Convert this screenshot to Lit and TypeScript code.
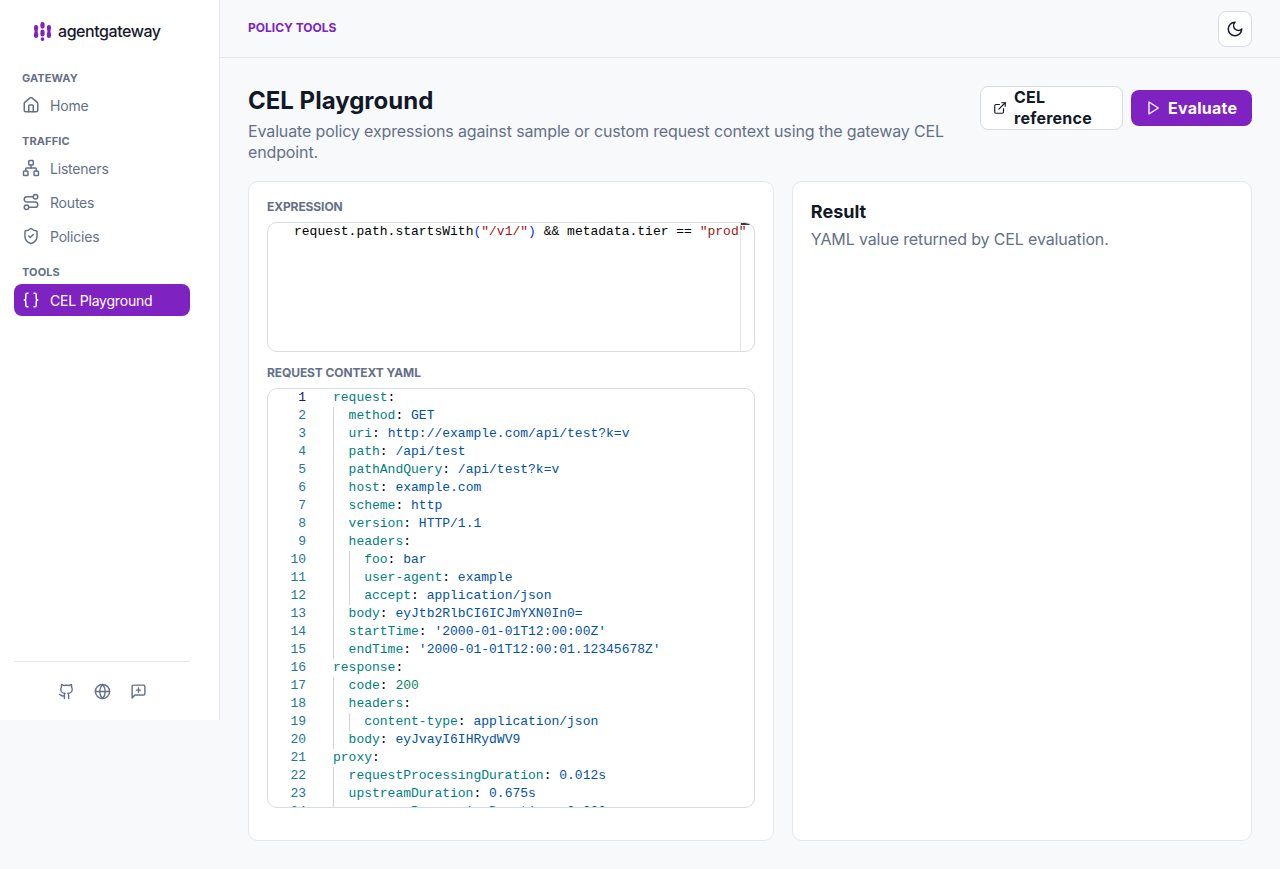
import { LitElement, html, css, svg } from "lit";
import { customElement } from "lit/decorators.js";

const icons = {
  home: svg`<path d="M15 21v-8a1 1 0 0 0-1-1h-4a1 1 0 0 0-1 1v8"/><path d="M3 10a2 2 0 0 1 .709-1.528l7-5.999a2 2 0 0 1 2.582 0l7 5.999A2 2 0 0 1 21 10v9a2 2 0 0 1-2 2H5a2 2 0 0 1-2-2z"/>`,
  network: svg`<rect x="16" y="16" width="6" height="6" rx="1"/><rect x="2" y="16" width="6" height="6" rx="1"/><rect x="9" y="2" width="6" height="6" rx="1"/><path d="M5 16v-3a1 1 0 0 1 1-1h12a1 1 0 0 1 1 1v3"/><path d="M12 12V8"/>`,
  route: svg`<circle cx="6" cy="19" r="3"/><path d="M9 19h8.5a3.5 3.5 0 0 0 0-7h-11a3.5 3.5 0 0 1 0-7H15"/><circle cx="18" cy="5" r="3"/>`,
  shield: svg`<path d="M20 13c0 5-3.5 7.5-7.66 8.95a1 1 0 0 1-.67-.01C7.5 20.5 4 18 4 13V6a1 1 0 0 1 1-1c2 0 4.5-1.2 6.24-2.72a1.17 1.17 0 0 1 1.52 0C14.51 3.81 17 5 19 5a1 1 0 0 1 1 1z"/><path d="m9 12 2 2 4-4"/>`,
  braces: svg`<path d="M8 3H7a2 2 0 0 0-2 2v5a2 2 0 0 1-2 2 2 2 0 0 1 2 2v5c0 1.1.9 2 2 2h1"/><path d="M16 21h1a2 2 0 0 0 2-2v-5c0-1.1.9-2 2-2a2 2 0 0 1-2-2V5a2 2 0 0 0-2-2h-1"/>`,
  github: svg`<path d="M15 22v-4a4.8 4.8 0 0 0-1-3.5c3 0 6-2 6-5.5.08-1.25-.27-2.48-1-3.5.28-1.15.28-2.35 0-3.5 0 0-1 0-3 1.5-2.64-.5-5.36-.5-8 0C6 2 5 2 5 2c-.3 1.15-.3 2.35 0 3.5A5.403 5.403 0 0 0 4 9c0 3.5 3 5.5 6 5.5-.39.49-.68 1.05-.85 1.65-.17.6-.22 1.23-.15 1.85v4"/><path d="M9 18c-4.51 2-5-2-7-2"/>`,
  globe: svg`<circle cx="12" cy="12" r="10"/><path d="M12 2a14.5 14.5 0 0 0 0 20 14.5 14.5 0 0 0 0-20"/><path d="M2 12h20"/>`,
  feedback: svg`<path d="M21 15a2 2 0 0 1-2 2H7l-4 4V5a2 2 0 0 1 2-2h14a2 2 0 0 1 2 2z"/><path d="M12 7v6"/><path d="M9 10h6"/>`,
  moon: svg`<path d="M12 3a6 6 0 0 0 9 9 9 9 0 1 1-9-9Z"/>`,
  external: svg`<path d="M15 3h6v6"/><path d="M10 14 21 3"/><path d="M18 13v6a2 2 0 0 1-2 2H5a2 2 0 0 1-2-2V8a2 2 0 0 1 2-2h6"/>`,
  play: svg`<polygon points="6 3 20 12 6 21 6 3"/>`,
};

const icon = (name: keyof typeof icons, size: number) => html`<svg
  class="icon"
  width=${size}
  height=${size}
  viewBox="0 0 24 24"
  fill="none"
  stroke="currentColor"
  stroke-width="2"
  stroke-linecap="round"
  stroke-linejoin="round"
>${icons[name]}</svg>`;

// indent, key, value, value kind
type YamlLine = [number, string, string?, string?];

const yaml: YamlLine[] = [
  [0, "request"],
  [1, "method", "GET"],
  [1, "uri", "http://example.com/api/test?k=v"],
  [1, "path", "/api/test"],
  [1, "pathAndQuery", "/api/test?k=v"],
  [1, "host", "example.com"],
  [1, "scheme", "http"],
  [1, "version", "HTTP/1.1"],
  [1, "headers"],
  [2, "foo", "bar"],
  [2, "user-agent", "example"],
  [2, "accept", "application/json"],
  [1, "body", "eyJtb2RlbCI6ICJmYXN0In0="],
  [1, "startTime", "'2000-01-01T12:00:00Z'"],
  [1, "endTime", "'2000-01-01T12:00:01.12345678Z'"],
  [0, "response"],
  [1, "code", "200", "num"],
  [1, "headers"],
  [2, "content-type", "application/json"],
  [1, "body", "eyJvayI6IHRydWV9"],
  [0, "proxy"],
  [1, "requestProcessingDuration", "0.012s"],
  [1, "upstreamDuration", "0.675s"],
  [1, "responseProcessingDuration", "0.000s"],
];

@customElement("app-root")
export class AppRoot extends LitElement {
  static styles = css`
    :host {
      display: flex;
      align-items: flex-start;
      min-height: 100vh;
      background: #f8f9fb;
      color: #111827;
      font-family: Inter, "Liberation Sans", sans-serif;
    }
    .icon {
      display: block;
      flex: none;
    }
    .sidebar {
      box-sizing: border-box;
      width: 220px;
      height: 720px;
      flex: none;
      display: flex;
      flex-direction: column;
      padding: 0 29px 0 14px;
      background: #fff;
      border-right: 1px solid #e5e7ec;
    }
    .logo {
      display: flex;
      align-items: center;
      gap: 7px;
      height: 62px;
      padding-left: 20px;
      font-size: 16px;
      font-weight: 500;
      letter-spacing: -0.45px;
      color: #171a2b;
    }
    .section {
      margin: 0;
      padding-left: 8px;
      font-size: 11px;
      line-height: 14px;
      font-weight: 700;
      letter-spacing: 0.1px;
      color: #64708a;
    }
    .section.first {
      margin-top: 9px;
    }
    .section.next {
      margin-top: 12px;
    }
    .nav {
      display: flex;
      flex-direction: column;
      margin-top: 3px;
    }
    .item {
      display: flex;
      align-items: center;
      gap: 10px;
      height: 34px;
      padding: 0 8px;
      border-radius: 8px;
      font-size: 14px;
      letter-spacing: -0.2px;
      color: #64708a;
    }
    .item.active {
      height: 32px;
      margin-top: 2px;
      background: #7e22c2;
      color: #fff;
    }
    .side-foot {
      margin-top: auto;
      height: 58px;
      border-top: 1px solid #e5e7ec;
      display: flex;
      justify-content: center;
      align-items: center;
      gap: 19px;
      color: #64708a;
    }
    .main {
      flex: 1;
      min-width: 0;
    }
    .topbar {
      box-sizing: border-box;
      height: 58px;
      display: flex;
      align-items: center;
      justify-content: space-between;
      padding: 0 28px;
      border-bottom: 1px solid #e5e7ec;
    }
    .crumb {
      margin-bottom: 2px;
      font-size: 12px;
      font-weight: 700;
      color: #7e22c2;
    }
    .theme {
      box-sizing: border-box;
      width: 34px;
      height: 36px;
      display: flex;
      align-items: center;
      justify-content: center;
      background: #fff;
      border: 1px solid #d7dbe4;
      border-radius: 8px;
      color: #171a2b;
    }
    .content {
      padding: 28px 28px 0;
    }
    .head {
      display: flex;
      justify-content: space-between;
      align-items: flex-start;
      height: 95px;
    }
    .titles {
      width: 704px;
    }
    h1 {
      margin: 0;
      font-size: 24px;
      line-height: 30px;
      font-weight: 700;
      color: #111827;
    }
    .sub {
      margin: 0;
      font-size: 16px;
      line-height: 21px;
      letter-spacing: -0.13px;
      color: #64708a;
    }
    .titles .sub {
      margin-top: 5px;
    }
    .actions {
      display: flex;
      align-items: center;
      gap: 8px;
    }
    .btn {
      box-sizing: border-box;
      display: flex;
      align-items: center;
      border-radius: 8px;
      font-size: 16px;
      line-height: 21px;
      font-weight: 700;
      letter-spacing: 0.25px;
    }
    .btn.ghost {
      width: 143px;
      height: 44px;
      gap: 7px;
      padding: 0 12px;
      background: #fff;
      border: 1px solid #d7dbe4;
      color: #111827;
    }
    .btn.primary {
      width: 121px;
      height: 36px;
      gap: 7px;
      padding: 0 14px;
      background: #7e22c2;
      color: #fff;
    }
    .grid {
      display: grid;
      grid-template-columns: 8fr 7fr;
      gap: 18px;
    }
    .card {
      background: #fff;
      border: 1px solid #e5e7ec;
      border-radius: 10px;
      padding: 18px;
      min-width: 0;
    }
    .card.form {
      padding-bottom: 32px;
    }
    .label {
      margin: 0 0 9px;
      font-size: 12px;
      line-height: 13px;
      font-weight: 700;
      letter-spacing: -0.1px;
      color: #64708a;
    }
    .label.second {
      margin-top: 14px;
    }
    .editor {
      box-sizing: border-box;
      position: relative;
      overflow: hidden;
      border: 1px solid #d7dbe4;
      border-radius: 10px;
      background: #fff;
      font-family: "Liberation Mono", monospace;
      font-size: 13px;
      line-height: 18px;
      color: #000;
      white-space: pre;
    }
    .editor.expr {
      height: 130px;
      padding-left: 26px;
    }
    .editor.yaml {
      height: 420px;
    }
    .expr-line {
      position: relative;
    }
    .ruler {
      position: absolute;
      top: 0;
      right: 0;
      bottom: 0;
      width: 13px;
      border-left: 1px solid #e6e6e6;
    }
    .ruler::before {
      content: "";
      position: absolute;
      top: 0;
      left: 0;
      width: 9px;
      height: 2px;
      background: #3a3a3a;
    }
    .bracket {
      color: #0431fa;
    }
    .str {
      color: #a31515;
    }
    .line {
      display: flex;
      height: 18px;
    }
    .ln {
      width: 38px;
      margin-right: 27px;
      flex: none;
      text-align: right;
      color: #237893;
    }
    .ln.current {
      color: #0b216f;
    }
    .guide {
      box-sizing: border-box;
      width: 15.6px;
      flex: none;
      border-left: 1px solid #d3d3d3;
    }
    .key {
      color: #008080;
    }
    .val {
      color: #0451a5;
    }
    .num {
      color: #098658;
    }
    .result-title {
      margin: 0 0 5px;
      font-size: 18px;
      line-height: 24px;
      font-weight: 700;
      color: #111827;
    }
  `;

  private renderYamlLine(l: YamlLine, i: number) {
    const [indent, key, value, kind] = l;
    return html`<div class="line">
      <span class="ln ${i === 0 ? "current" : ""}">${i + 1}</span>
      ${Array.from({ length: indent }, () => html`<span class="guide"></span>`)}
      <span><span class="key">${key}</span>:${value
        ? html` <span class=${kind === "num" ? "num" : "val"}>${value}</span>`
        : ""}</span>
    </div>`;
  }

  private renderLogo() {
    return html`<svg width="17" height="19" viewBox="0 0 18 20" fill="#7e22c2" class="icon">
      <rect x="0" y="3" width="4.4" height="6.4" rx="2.2" />
      <rect x="0.6" y="8" width="3.2" height="4" />
      <rect x="0" y="10.6" width="4.4" height="6.4" rx="2.2" />
      <rect x="6.8" y="0" width="4.4" height="7" rx="2.2" />
      <rect x="6.8" y="8" width="4.4" height="7.4" rx="2.2" />
      <circle cx="9" cy="18" r="2" />
      <rect x="13.6" y="3" width="4.4" height="6.4" rx="2.2" />
      <rect x="14.2" y="8" width="3.2" height="4" />
      <rect x="13.6" y="10.6" width="4.4" height="6.4" rx="2.2" />
    </svg>`;
  }

  render() {
    return html`
      <aside class="sidebar">
        <div class="logo">${this.renderLogo()}<span>agentgateway</span></div>
        <p class="section first">GATEWAY</p>
        <nav class="nav">
          <div class="item">${icon("home", 18)}Home</div>
        </nav>
        <p class="section next">TRAFFIC</p>
        <nav class="nav">
          <div class="item">${icon("network", 18)}Listeners</div>
          <div class="item">${icon("route", 18)}Routes</div>
          <div class="item">${icon("shield", 18)}Policies</div>
        </nav>
        <p class="section next">TOOLS</p>
        <nav class="nav">
          <div class="item active">${icon("braces", 18)}CEL Playground</div>
        </nav>
        <div class="side-foot">
          ${icon("github", 17)}${icon("globe", 17)}${icon("feedback", 17)}
        </div>
      </aside>
      <div class="main">
        <header class="topbar">
          <span class="crumb">POLICY TOOLS</span>
          <div class="theme">${icon("moon", 18)}</div>
        </header>
        <div class="content">
          <div class="head">
            <div class="titles">
              <h1>CEL Playground</h1>
              <p class="sub">
                Evaluate policy expressions against sample or custom request context using the gateway CEL endpoint.
              </p>
            </div>
            <div class="actions">
              <div class="btn ghost">${icon("external", 14)}<span>CEL reference</span></div>
              <div class="btn primary">${icon("play", 16)}<span>Evaluate</span></div>
            </div>
          </div>
          <div class="grid">
            <section class="card form">
              <p class="label">EXPRESSION</p>
              <div class="editor expr"><div class="ruler"></div><div class="expr-line">request.path.startsWith<span class="bracket">(</span><span class="str">"/v1/"</span><span class="bracket">)</span> &amp;&amp; metadata.tier == <span class="str">"prod"</span></div></div>
              <p class="label second">REQUEST CONTEXT YAML</p>
              <div class="editor yaml">${yaml.map((l, i) => this.renderYamlLine(l, i))}</div>
            </section>
            <section class="card">
              <h2 class="result-title">Result</h2>
              <p class="sub">YAML value returned by CEL evaluation.</p>
            </section>
          </div>
        </div>
      </div>
    `;
  }
}
